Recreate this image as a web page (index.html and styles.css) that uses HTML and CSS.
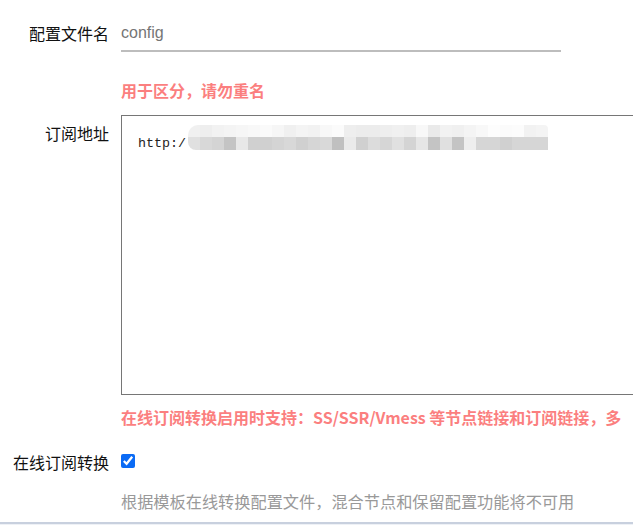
FILE: index.html
```html
<!DOCTYPE html>
<html lang="zh">
<head>
<meta charset="utf-8">
<title>配置</title>
<link rel="stylesheet" href="styles.css">
</head>
<body>
<div class="form">
  <div class="label label-input">配置文件名</div>
  <div class="field">
    <div class="input">config</div>
  </div>

  <div></div>
  <div class="hint hint-first">用于区分，请勿重名</div>

  <div class="label label-area">订阅地址</div>
  <div class="field">
    <div class="textarea"><span class="mono">http:/</span><span class="blur"><span class="blur-top"></span><span class="blur-bottom"></span></span></div>
  </div>

  <div></div>
  <div class="hint hint-second">在线订阅转换启用时支持：SS/SSR/Vmess 等节点链接和订阅链接，多</div>

  <div class="label label-check">在线订阅转换</div>
  <div class="field check-field">
    <input type="checkbox" class="check" checked>
  </div>

  <div></div>
  <div class="note">根据模板在线转换配置文件，混合节点和保留配置功能将不可用</div>
</div>
<div class="bottom-bar"></div>
</body>
</html>
```

FILE: styles.css
```css
html, body {
  margin: 0;
  padding: 0;
  overflow: hidden;
  background: #ffffff;
}

body {
  width: 633px;
  height: 525px;
  font-family: "Noto Sans CJK SC", "Liberation Sans", sans-serif;
  font-size: 16px;
  color: #1a1a1a;
  position: relative;
}

.form {
  display: grid;
  grid-template-columns: 109px 1fr;
  column-gap: 12px;
  padding-top: 14px;
}

.label {
  text-align: right;
  white-space: nowrap;
  font-size: 16px;
  line-height: 20px;
  color: #111;
}

.label-input {
  line-height: 38px;
}

.field {
  min-width: 0;
}

.input {
  width: 440px;
  height: 36px;
  line-height: 38px;
  border-bottom: 2px solid #bdbdbd;
  font-family: "Liberation Sans", Arial, sans-serif;
  font-size: 16px;
  color: #757575;
  box-sizing: content-box;
}

.hint {
  color: #fb7f7f;
  font-weight: 700;
  font-size: 16px;
  line-height: 20px;
  white-space: nowrap;
}

.hint-first {
  margin-top: 28px;
}

.label-area {
  margin-top: 15px;
  padding-top: 8px;
}

.textarea {
  margin-top: 15px;
  width: 560px;
  height: 280px;
  border: 1px solid #767676;
  padding: 12px 0 0 16px;
  box-sizing: border-box;
  position: relative;
  white-space: nowrap;
}

.mono {
  font-family: "Liberation Mono", "DejaVu Sans Mono", monospace;
  font-size: 13.33px;
  line-height: 28px;
  color: #222;
}

.blur {
  position: absolute;
  left: 66px;
  top: 9px;
  width: 360px;
  height: 25px;
  display: flex;
  flex-direction: column;
}

.blur-top {
  height: 12px;
  border-top-left-radius: 10px;
  border-top-right-radius: 4px;
  background: linear-gradient(to right,
    #f0f0f0 0 12px, #eeeeee 12px 24px, #f2f2f2 24px 36px, #f4f4f4 36px 48px,
    #f6f6f6 48px 60px, #f8f8f8 60px 72px, #fafafa 72px 84px, #f6f6f6 84px 96px,
    #f0f0f0 96px 108px, #f4f4f4 108px 120px, #f2f2f2 120px 132px, #f8f8f8 132px 144px,
    #fbfbfb 144px 156px, #eeeeee 156px 168px, #ececec 168px 180px, #ececec 180px 192px,
    #eeeeee 192px 204px, #f0f0f0 204px 216px, #eeeeee 216px 228px, #f8f8f8 228px 240px,
    #eaeaea 240px 252px, #f2f2f2 252px 264px, #f0f0f0 264px 276px, #f4f4f4 276px 288px,
    #f8f8f8 288px 300px, #fdfdfd 300px 312px, #fbfbfb 312px 324px, #fcfcfc 324px 336px,
    #f2f2f2 336px 348px, #f4f4f4 348px 360px);
}

.blur-bottom {
  height: 13px;
  border-bottom-left-radius: 8px;
  background: linear-gradient(to right,
    #e0e0e0 0 12px, #d8d8d8 12px 24px, #d4d4d4 24px 36px, #c4c4c4 36px 48px,
    #e8e8e8 48px 60px, #d0d0d0 60px 72px, #d0d0d0 72px 84px, #d4d4d4 84px 96px,
    #d8d8d8 96px 108px, #d0d0d0 108px 120px, #d6d6d6 120px 132px, #d9d9d9 132px 144px,
    #c0c0c0 144px 156px, #eaeaea 156px 168px, #d0d0d0 168px 180px, #dcdcdc 180px 192px,
    #d6d6d6 192px 204px, #e0e0e0 204px 216px, #d4d4d4 216px 228px, #e6e6e6 228px 240px,
    #c4c4c4 240px 252px, #e0e0e0 252px 264px, #c4c4c4 264px 276px, #eeeeee 276px 288px,
    #d6d6d6 288px 300px, #d6d6d6 300px 312px, #d0d0d0 312px 324px, #d6d6d6 324px 336px,
    #d6d6d6 336px 348px, #d6d6d6 348px 360px);
}

.hint-second {
  margin-top: 12px;
}

.label-check {
  margin-top: 24px;
  padding-top: 1px;
}

.check-field {
  margin-top: 24px;
  height: 20px;
  display: flex;
  align-items: center;
}

.check {
  margin: 0;
  width: 14px;
  height: 14px;
  accent-color: #0b6bf5;
}

.note {
  margin-top: 19px;
  font-size: 16.2px;
  line-height: 20px;
  color: #999999;
  white-space: nowrap;
}

.bottom-bar {
  position: absolute;
  left: 0;
  right: 0;
  bottom: 0;
  height: 3px;
  border-top: 2px solid #c8d0de;
  background: #eef1f6;
  box-sizing: border-box;
}
```
